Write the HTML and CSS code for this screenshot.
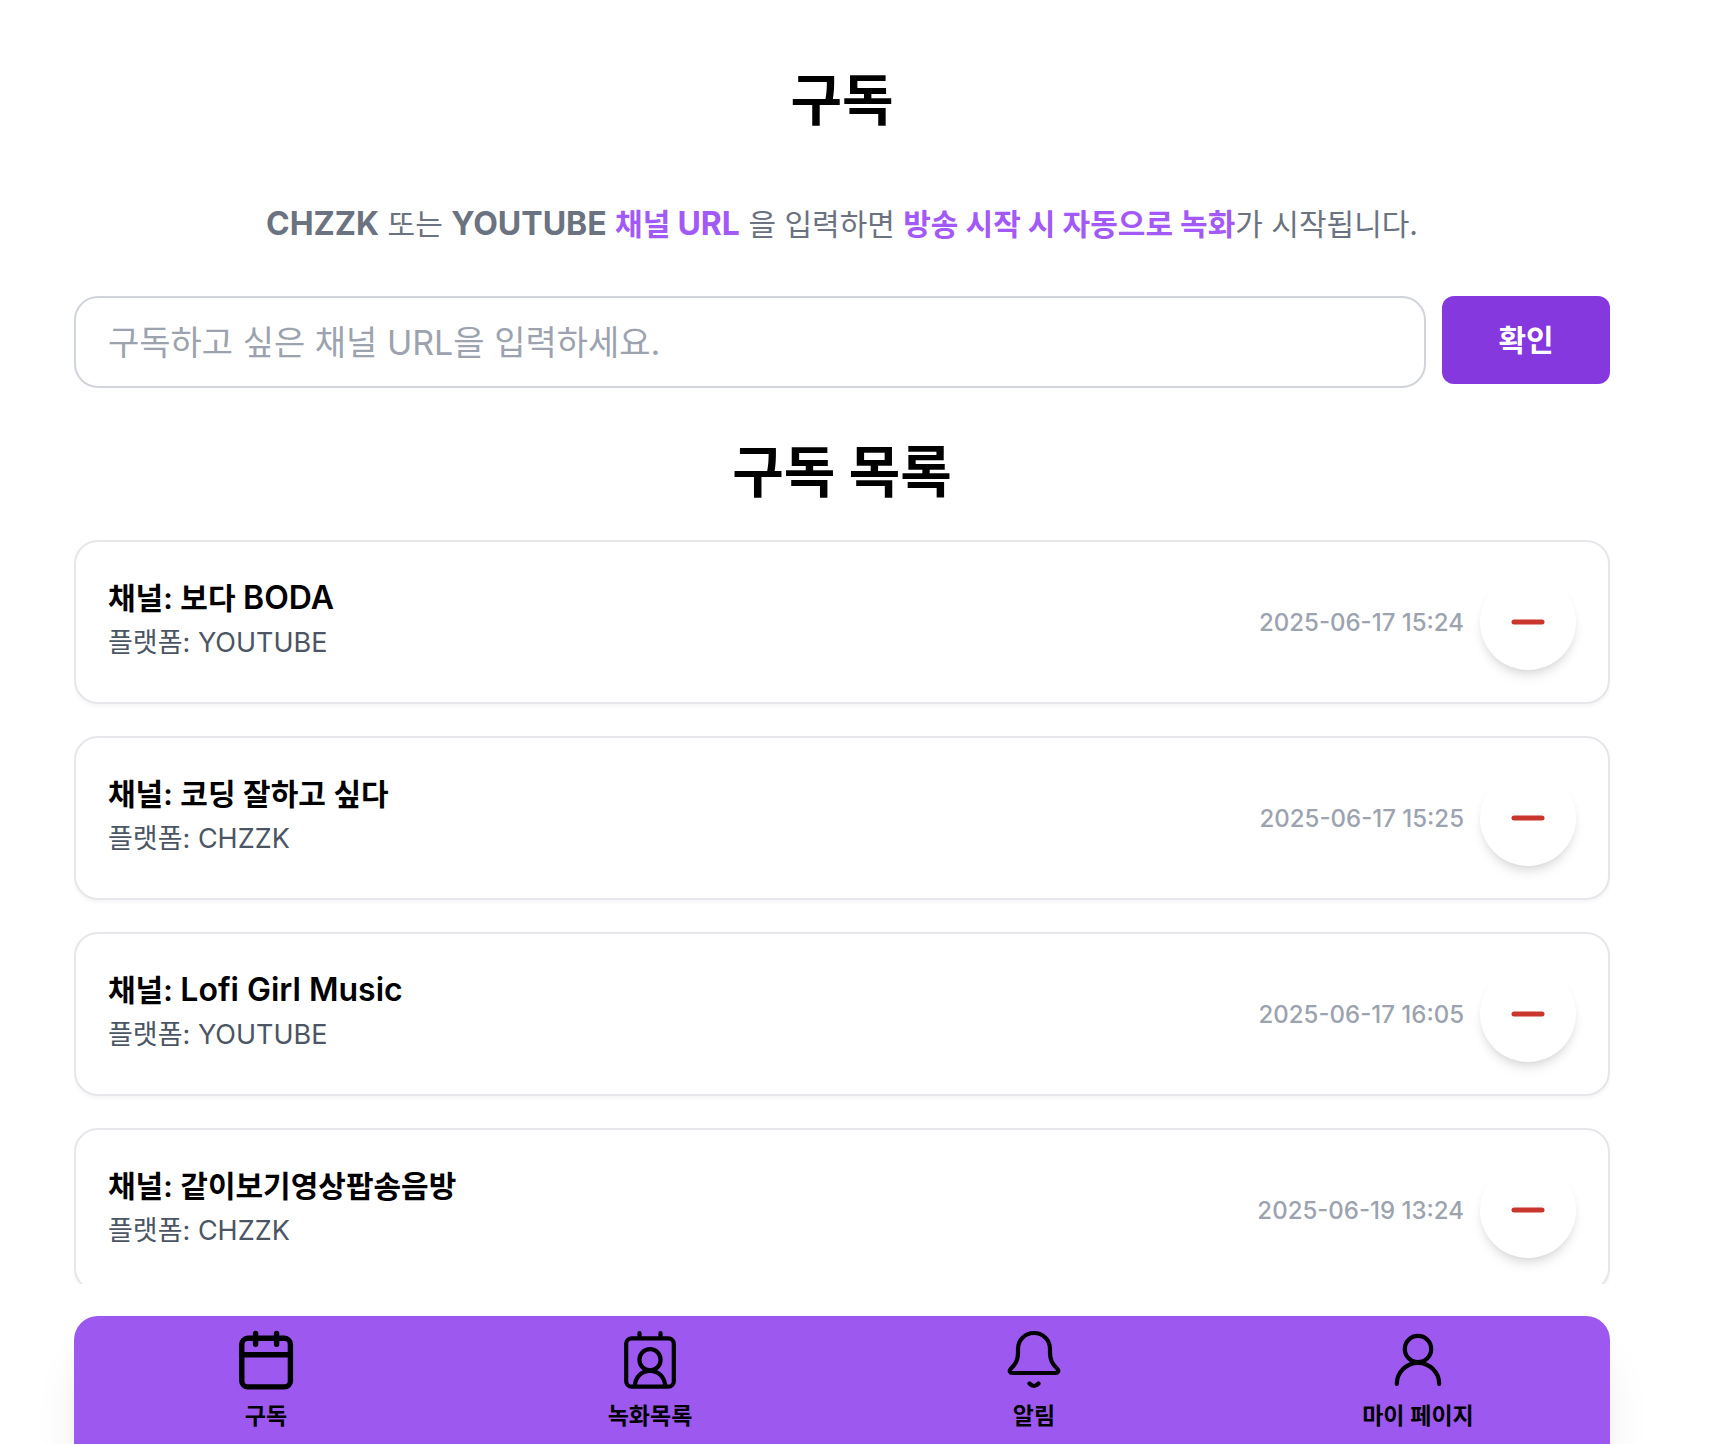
FILE: index.html
```html
<!DOCTYPE html>
<html lang="ko">
<head>
<meta charset="utf-8">
<meta name="viewport" content="width=device-width, initial-scale=1">
<title>구독</title>
<link rel="stylesheet" href="styles.css">
</head>
<body>
<div class="page">
  <main class="content">
    <h1 class="title">구독</h1>
    <p class="lead"><strong class="latin">CHZZK</strong> 또는 <strong class="latin">YOUTUBE</strong> <strong class="accent">채널 <span class="latin">URL</span></strong> 을 입력하면 <strong class="accent">방송 시작 시 자동으로 녹화</strong>가 시작됩니다.</p>
    <form class="subscribe">
      <input class="url" type="text" aria-label="채널 URL" placeholder="구독하고 싶은 채널 URL을 입력하세요.">
      <button class="submit" type="button">확인</button>
    </form>
    <h2 class="title list-title">구독 목록</h2>
    <ul class="list">
      <li class="card">
        <div class="info"><h3 class="channel">채널: 보다 <span class="latin">BODA</span></h3><p class="platform">플랫폼: YOUTUBE</p></div>
        <time class="date">2025-06-17 15:24</time>
        <button class="remove" type="button" aria-label="구독 취소"><svg viewBox="0 0 48 48"><path d="M10 24H38"/></svg></button>
      </li>
      <li class="card">
        <div class="info"><h3 class="channel">채널: 코딩 잘하고 싶다</h3><p class="platform">플랫폼: CHZZK</p></div>
        <time class="date">2025-06-17 15:25</time>
        <button class="remove" type="button" aria-label="구독 취소"><svg viewBox="0 0 48 48"><path d="M10 24H38"/></svg></button>
      </li>
      <li class="card">
        <div class="info"><h3 class="channel">채널: <span class="latin">Lofi Girl Music</span></h3><p class="platform">플랫폼: YOUTUBE</p></div>
        <time class="date">2025-06-17 16:05</time>
        <button class="remove" type="button" aria-label="구독 취소"><svg viewBox="0 0 48 48"><path d="M10 24H38"/></svg></button>
      </li>
      <li class="card">
        <div class="info"><h3 class="channel">채널: 같이보기영상팝송음방</h3><p class="platform">플랫폼: CHZZK</p></div>
        <time class="date">2025-06-19 13:24</time>
        <button class="remove" type="button" aria-label="구독 취소"><svg viewBox="0 0 48 48"><path d="M10 24H38"/></svg></button>
      </li>
    </ul>
  </main>
  <nav class="tabs">
    <a class="tab" href="#subscribe">
      <svg class="icon heavy" viewBox="0 0 60 60"><rect x="5.8" y="8.3" width="48.6" height="48.6" rx="6"/><path d="M5.8 24.7H54.4M19.6 3.4V14.2M40.6 3.4V14.2"/></svg>
      구독
    </a>
    <a class="tab" href="#recordings">
      <svg class="icon" viewBox="0 0 60 60"><rect x="6.2" y="8.3" width="47.6" height="48.4" rx="5.5"/><path d="M19.5 3V8M40.5 3V8M14.8 56C15.4 47 21.5 40.8 30 40.8S44.6 47 45.2 56"/><circle cx="30" cy="29.8" r="10.6"/></svg>
      녹화목록
    </a>
    <a class="tab" href="#alerts">
      <svg class="icon" viewBox="0 0 60 60"><path d="M14 19C14 10 21 3 30 3S46 10 46 19V23C46 30 49 35 53 38.500C55.500 41 54 43 51.500 43H8.500C6 43 4.500 41 7 38.500C11 35 14 30 14 23ZM25.500 53.500Q30 58.500 34.500 53.500"/></svg>
      알림
    </a>
    <a class="tab" href="#mypage">
      <svg class="icon" viewBox="0 0 60 60"><circle cx="30" cy="19" r="13.2"/><path d="M8.800 54A21.200 21.200 0 0 1 51.200 54"/></svg>
      마이 페이지
    </a>
  </nav>
</div>
</body>
</html>
```
FILE: styles.css
```css
* { box-sizing: border-box; }

body {
  margin: 0;
  background: #fff;
  color: #000;
  font-family: Inter, "Noto Sans CJK KR", sans-serif;
}

h1, h2, h3, p, ul { margin: 0; padding: 0; }

.page {
  display: flex;
  flex-direction: column;
  gap: 32px;
  height: 100vh;
  padding: 0 112px 0 74px;
  overflow: hidden;
}

.content {
  display: flex;
  flex: 1;
  flex-direction: column;
  min-height: 0;
  padding-top: 64px;
}

.title {
  font-size: 56px;
  font-weight: 700;
  line-height: 72px;
  text-align: center;
}

.lead {
  margin: 64px 0 48px;
  color: #6b7280;
  font-size: 30px;
  line-height: 48px;
  text-align: center;
}

.lead strong { font-weight: 700; }
.lead .accent { color: #a259f7; }

.latin { font-size: 32px; line-height: 32px; }

.subscribe {
  display: flex;
  align-items: flex-start;
  gap: 16px;
}

.url {
  flex: 1;
  min-width: 0;
  height: 92px;
  padding: 0 32px;
  border: 2px solid #d1d5db;
  border-radius: 24px;
  background: #fff;
  color: #000;
  font: 400 34px Inter, "Noto Sans CJK KR", sans-serif;
}

.url::placeholder { color: #9ca3af; opacity: 1; }

.submit {
  width: 168px;
  height: 88px;
  padding: 0 0 4px;
  border: 0;
  border-radius: 12px;
  background: #8638df;
  color: #fff;
  font: 700 30px Inter, "Noto Sans CJK KR", sans-serif;
}

.list-title { margin: 48px 0 32px; }

.list {
  display: flex;
  flex: 1;
  flex-direction: column;
  gap: 32px;
  min-height: 0;
  overflow: hidden;
  list-style: none;
}

.card {
  display: flex;
  flex: none;
  align-items: center;
  gap: 16px;
  height: 164px;
  padding: 32px;
  border: 2px solid #e5e7eb;
  border-radius: 24px;
  background: #fff;
  box-shadow: 0 2px 4px rgba(0, 0, 0, .05);
}

.info { flex: 1; align-self: flex-start; }

.channel {
  font-size: 30px;
  font-weight: 600;
  line-height: 48px;
}

.platform {
  color: #4b5563;
  font-size: 27px;
  line-height: 42px;
}

.date {
  padding-top: 2px;
  color: #9ca3af;
  font-size: 24px;
  font-weight: 500;
  line-height: 32px;
}

.remove {
  display: grid;
  place-items: center;
  width: 96px;
  height: 96px;
  padding: 0;
  border: 0;
  border-radius: 50%;
  background: #fff;
  box-shadow: 0 8px 12px -2px rgba(0, 0, 0, .1), 0 4px 8px -4px rgba(0, 0, 0, .1);
}

.remove svg {
  width: 48px;
  height: 48px;
  fill: none;
  stroke: #c8372d;
  stroke-width: 5;
  stroke-linecap: round;
}

.tabs {
  display: flex;
  flex: none;
  height: 128px;
  padding-top: 14px;
  border-radius: 24px 24px 0 0;
  background: #9d59ef;
  box-shadow: 0 40px 50px -10px rgba(0, 0, 0, .1), 0 16px 20px -12px rgba(0, 0, 0, .1);
}

.tab {
  display: flex;
  flex: 1;
  flex-direction: column;
  align-items: center;
  gap: 10px;
  color: #000;
  font-size: 23px;
  font-weight: 600;
  line-height: 32px;
  text-decoration: none;
}

.icon {
  width: 60px;
  height: 60px;
  fill: none;
  stroke: #000;
  stroke-width: 4.2;
  stroke-linecap: round;
  stroke-linejoin: round;
}

.heavy { stroke-width: 5.4; }
```
